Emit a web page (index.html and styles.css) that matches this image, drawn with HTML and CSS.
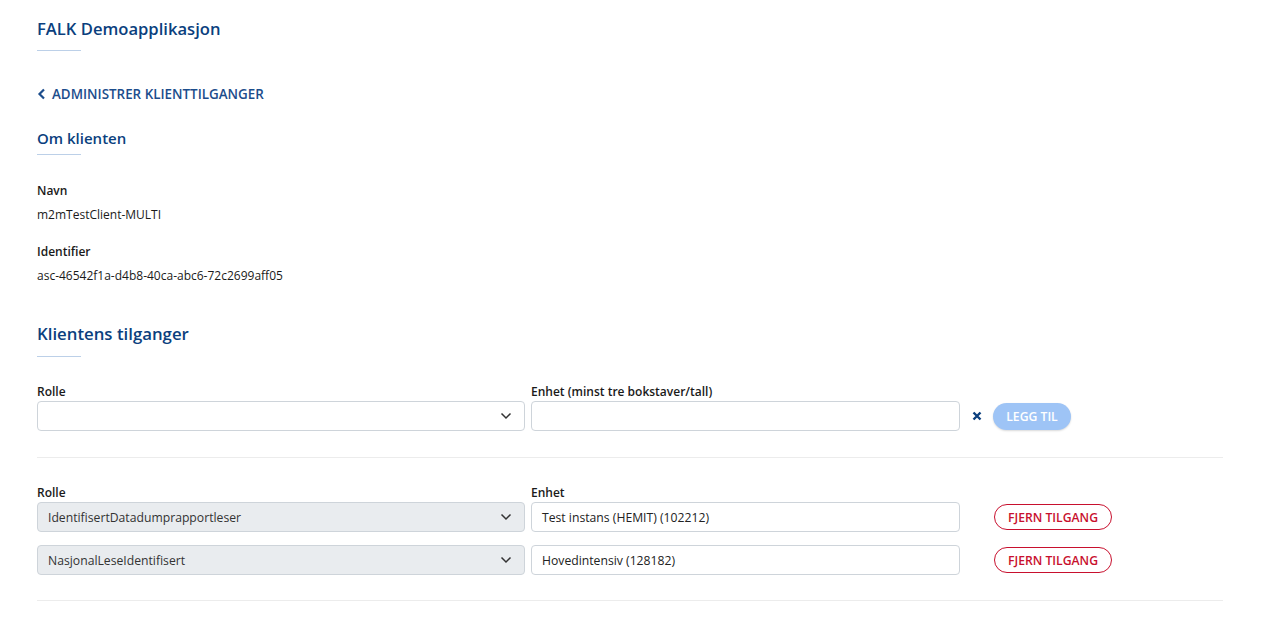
FILE: index.html
```html
<!DOCTYPE html>
<html lang="no">
<head>
    <meta charset="UTF-8">
    <meta name="viewport" content="width=device-width, initial-scale=1.0">
    <title>FALK Demoapplikasjon</title>
    <link rel="stylesheet" href="styles.css">
</head>
<body>
    <div class="page">
        <header class="app-header">
            <h1 class="app-title">FALK Demoapplikasjon</h1>
            <div class="rule"></div>
        </header>

        <a class="back-link" href="#">
            <svg width="9" height="12" viewBox="0 0 9 12"><path d="M7 1.5 2.5 6 7 10.5" fill="none" stroke="currentColor" stroke-width="2.2"/></svg>
            ADMINISTRER KLIENTTILGANGER
        </a>

        <!-- Om klienten -->
        <section class="section">
            <h2 class="section-title">Om klienten</h2>
            <div class="rule rule-small"></div>

            <div class="field">
                <div class="field-label">Navn</div>
                <div class="field-value">m2mTestClient-MULTI</div>
            </div>
            <div class="field">
                <div class="field-label">Identifier</div>
                <div class="field-value">asc-46542f1a-d4b8-40ca-abc6-72c2699aff05</div>
            </div>
        </section>

        <!-- Klientens tilganger -->
        <section class="section access">
            <h2 class="section-title big">Klientens tilganger</h2>
            <div class="rule rule-big"></div>

            <div class="access-form">
                <div class="col-role">
                    <label class="input-label">Rolle</label>
                    <div class="select">
                        <span class="select-text"></span>
                        <svg class="chevron" width="12" height="8" viewBox="0 0 12 8"><path d="M1.5 1.5 6 6 10.5 1.5" fill="none" stroke="#333" stroke-width="1.5"/></svg>
                    </div>
                </div>
                <div class="col-unit">
                    <label class="input-label">Enhet (minst tre bokstaver/tall)</label>
                    <div class="input"></div>
                </div>
                <div class="col-actions">
                    <svg class="clear" width="10" height="10" viewBox="0 0 10 10"><path d="M1.5 1.5 8.5 8.5M8.5 1.5 1.5 8.5" stroke="#0b3f7e" stroke-width="2.4"/></svg>
                    <button class="btn btn-add" disabled>LEGG TIL</button>
                </div>
            </div>

            <hr class="divider">

            <div class="access-list">
                <div class="access-row">
                    <div class="col-role">
                        <label class="input-label">Rolle</label>
                        <div class="select disabled">
                            <span class="select-text">IdentifisertDatadumprapportleser</span>
                            <svg class="chevron" width="12" height="8" viewBox="0 0 12 8"><path d="M1.5 1.5 6 6 10.5 1.5" fill="none" stroke="#333" stroke-width="1.5"/></svg>
                        </div>
                    </div>
                    <div class="col-unit">
                        <label class="input-label">Enhet</label>
                        <div class="input">Test instans (HEMIT) (102212)</div>
                    </div>
                    <div class="col-actions remove">
                        <button class="btn btn-remove">FJERN TILGANG</button>
                    </div>
                </div>
                <div class="access-row">
                    <div class="col-role">
                        <div class="select disabled">
                            <span class="select-text">NasjonalLeseIdentifisert</span>
                            <svg class="chevron" width="12" height="8" viewBox="0 0 12 8"><path d="M1.5 1.5 6 6 10.5 1.5" fill="none" stroke="#333" stroke-width="1.5"/></svg>
                        </div>
                    </div>
                    <div class="col-unit">
                        <div class="input">Hovedintensiv (128182)</div>
                    </div>
                    <div class="col-actions remove">
                        <button class="btn btn-remove">FJERN TILGANG</button>
                    </div>
                </div>
            </div>

            <hr class="divider bottom">
        </section>
    </div>
</body>
</html>
```

FILE: styles.css
```css
body {
    font-family: "Open Sans", "Noto Sans", sans-serif;
    margin: 0;
    padding: 0;
    color: #1a1a1a;
    background: white;
}

.page {
    padding: 17px 38px 0 37px;
}

.app-title {
    margin: 0;
    font-size: 16.6px;
    line-height: 24px;
    font-weight: 600;
    color: #0b3f7e;
}

.rule {
    width: 44px;
    height: 1px;
    background: #bcd0e8;
    margin-top: 9px;
}

.back-link {
    display: flex;
    align-items: center;
    gap: 6px;
    margin-top: 33px;
    height: 20px;
    font-size: 13.4px;
    font-weight: 600;
    color: #1c4d8c;
    text-decoration: none;
}

.section-title {
    margin: 23px 0 0;
    font-size: 15px;
    line-height: 22px;
    font-weight: 600;
    color: #0b3f7e;
}

.rule-small {
    margin-top: 5px;
}

.field {
    margin-top: 27px;
}

.field + .field {
    margin-top: 19px;
}

.field-label {
    font-size: 12px;
    line-height: 18px;
    font-weight: 600;
}

.field-value {
    margin-top: 6px;
    font-size: 12px;
    line-height: 18px;
}

.section-title.big {
    margin-top: 37px;
    font-size: 16.8px;
    line-height: 24px;
}

.rule-big {
    margin-top: 10px;
}

.access-form, .access-row {
    display: flex;
    align-items: flex-end;
}

.access-form {
    margin-top: 26px;
}

.col-role {
    width: 488px;
}

.col-unit {
    width: 429px;
    margin-left: 6px;
}

.input-label {
    display: block;
    font-size: 12px;
    line-height: 18px;
    font-weight: 600;
}

.select, .input {
    box-sizing: border-box;
    height: 30px;
    border: 1px solid #ced4da;
    border-radius: 4px;
    display: flex;
    align-items: center;
    padding: 0 10px;
    font-size: 12.2px;
    color: #222;
}

.select {
    justify-content: space-between;
    padding-right: 12px;
}

.select.disabled {
    background: #e9ecef;
    color: #333;
}

.col-actions {
    display: flex;
    align-items: center;
    height: 30px;
    margin-left: 12px;
}

.btn {
    font-family: inherit;
    font-weight: 600;
    font-size: 12.2px;
    border-radius: 14px;
    cursor: pointer;
}

.btn-add {
    margin-left: 11px;
    height: 27px;
    width: 78px;
    padding: 0;
    border: none;
    background: #9ec4f6;
    color: white;
    box-shadow: 0 1px 2px rgba(0, 0, 0, 0.15);
}

.btn-remove {
    margin-left: 22px;
    height: 26px;
    width: 118px;
    padding: 0;
    background: white;
    border: 1px solid #c8102e;
    color: #c8102e;
}

.divider {
    border: none;
    border-top: 1px solid #ececec;
    margin: 26px 0 0;
}

.access-list {
    margin-top: 26px;
}

.access-row + .access-row {
    margin-top: 13px;
}

.divider.bottom {
    margin-top: 25px;
}
```
